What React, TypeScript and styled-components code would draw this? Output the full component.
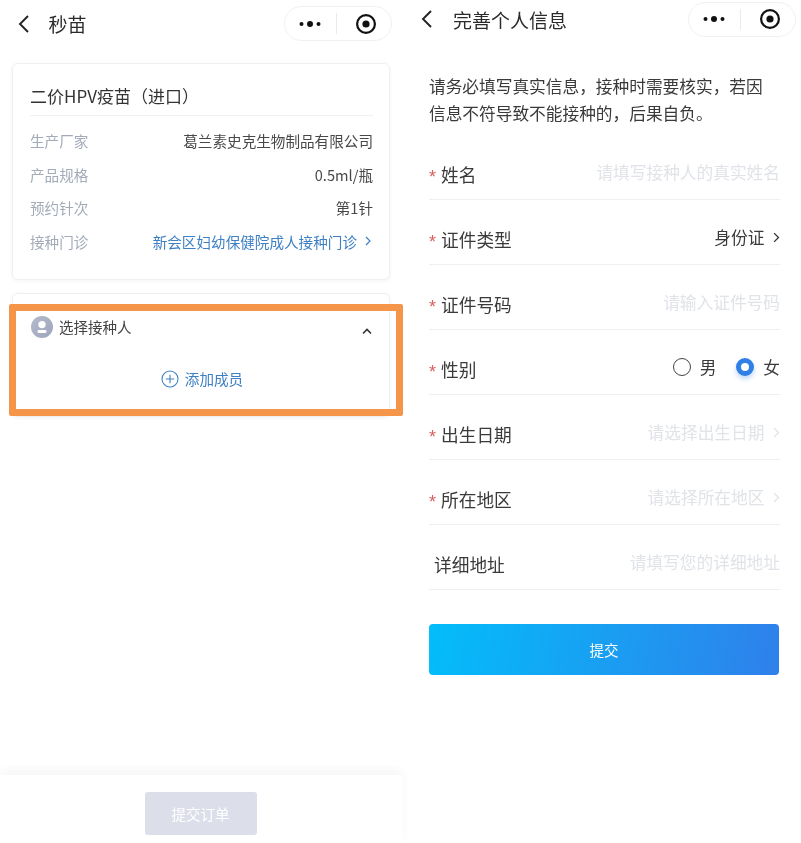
import * as React from 'react';
import styled, { createGlobalStyle } from 'styled-components';

const GlobalStyle = createGlobalStyle`
    html, body {
        margin: 0;
        padding: 0;
        background: #fff;
    }
    body {
        font-family: "Noto Sans CJK SC", "Liberation Sans", sans-serif;
        color: #333;
    }
    * {
        box-sizing: border-box;
    }
`;

const Page = styled.div`
    position: relative;
    display: flex;
    width: 801px;
    height: 843px;
    overflow: hidden;
    filter: blur(0.4px);
`;

const Screen = styled.section<{ $width: number }>`
    display: flex;
    flex-direction: column;
    width: ${(p) => p.$width}px;
    height: 100%;
`;

const NavBar = styled.header<{ $top: number; $right: number; $height: number }>`
    display: flex;
    flex: 0 0 auto;
    align-items: flex-start;
    height: ${(p) => p.$height}px;
    padding: ${(p) => p.$top}px ${(p) => p.$right}px 0 17px;
`;

const BackButton = styled.div<{ $width: number }>`
    display: flex;
    align-items: center;
    width: ${(p) => p.$width}px;
    height: 35px;
    color: #222;
`;

const NavTitle = styled.h1`
    flex: 1;
    margin: 0;
    font-size: 19px;
    font-weight: 400;
    line-height: 35px;
    color: #2b2b2b;
`;

const Capsule = styled.div`
    display: flex;
    align-items: center;
    width: 108px;
    height: 35px;
    border: 1px solid #eff0f1;
    border-radius: 18px;
    background: #fff;
`;

const CapsuleSlot = styled.div<{ $shift?: number }>`
    display: flex;
    flex: 1;
    align-items: center;
    justify-content: center;
    height: 100%;
    padding-left: ${(p) => p.$shift ?? 0}px;
`;

const CapsuleDivider = styled.div`
    width: 1px;
    height: 21px;
    background: #eaeaea;
`;

const Content = styled.main`
    flex: 1;
    padding: 0 13px 0 12px;
`;

const Card = styled.div`
    margin-bottom: 13px;
    padding: 17px 16px 0 17px;
    border: 1px solid #eef0f2;
    border-radius: 6px;
    background: #fff;
    box-shadow: 0 1px 4px rgba(40, 50, 70, 0.06);
`;

const VaccineCard = styled(Card)`
    height: 217px;
`;

const MemberCard = styled(Card)`
    height: 124px;
    padding: 21px 17px 0 18px;
`;

const CardTitle = styled.h2`
    margin: 0;
    padding-bottom: 5px;
    border-bottom: 1px solid #f0f1f3;
    font-size: 17px;
    font-weight: 400;
    line-height: 29px;
    color: #333;
`;

const InfoList = styled.dl`
    margin: 8px 0 0;
`;

const InfoRow = styled.div`
    display: flex;
    align-items: center;
    justify-content: space-between;
    height: 33.5px;
    font-size: 14.6px;
`;

const InfoLabel = styled.dt`
    color: #a3abb9;
`;

const InfoValue = styled.dd<{ $link?: boolean }>`
    display: flex;
    align-items: center;
    gap: 8px;
    margin: 0;
    padding-right: ${(p) => (p.$link ? '2px' : '0')};
    color: ${(p) => (p.$link ? '#3f80c4' : '#484848')};
`;

const MemberHeader = styled.div`
    display: flex;
    align-items: center;
    height: 24px;
    font-size: 14.5px;
    color: #444;
`;

const MemberAvatar = styled.div`
    display: flex;
    flex: 0 0 auto;
    margin-right: 6px;
`;

const MemberName = styled.span`
    flex: 1;
    padding-bottom: 2px;
`;

const CollapseIcon = styled.div`
    display: flex;
    margin: 8px 0 0;
`;

const AddMember = styled.div`
    display: flex;
    align-items: center;
    justify-content: center;
    gap: 6px;
    margin-top: 29px;
    padding-left: 1px;
    font-size: 14.6px;
    color: #3f80c4;
`;

const Footer = styled.footer`
    display: flex;
    flex: 0 0 auto;
    justify-content: center;
    height: 68px;
    padding: 17px 2px 0 0;
    background: #fff;
    box-shadow: 0 -5px 8px rgba(60, 60, 70, 0.045);
`;

const OrderButton = styled.div`
    display: flex;
    align-items: center;
    justify-content: center;
    width: 112px;
    height: 43px;
    border-radius: 3px;
    background: #dcdfea;
    font-size: 14.5px;
    color: #fff;
`;

const Highlight = styled.div`
    position: absolute;
    top: 304px;
    left: 9px;
    width: 394px;
    height: 112px;
    border: 7px solid #f59549;
    border-radius: 2px;
`;

const FormBody = styled.div`
    flex: 1;
    padding: 0 21px 0 26px;
`;

const Notice = styled.p`
    margin: 16px 0 8px;
    font-size: 16.7px;
    line-height: 27px;
    color: #3a3a3a;
`;

const FieldRow = styled.div`
    display: flex;
    align-items: center;
    height: 65px;
    padding-top: 14px;
    border-bottom: 1px solid #eeeff1;
`;

const Star = styled.span`
    flex: 0 0 auto;
    width: 12px;
    padding-top: 6px;
    font-family: "Liberation Sans", sans-serif;
    font-size: 18px;
    line-height: 20px;
    color: #d9605f;
`;

const FieldLabel = styled.label<{ $indent?: boolean }>`
    flex: 1;
    padding-left: ${(p) => (p.$indent ? '5px' : '0')};
    font-size: 17.7px;
    color: #3a3a3a;
`;

const FieldValue = styled.div<{ $placeholder?: boolean }>`
    display: flex;
    align-items: center;
    gap: 9px;
    padding-bottom: 3px;
    font-size: 16.7px;
    color: ${(p) => (p.$placeholder ? '#e0e3e7' : '#3a3a3a')};
`;

const RadioGroup = styled.div`
    display: flex;
    align-items: center;
    padding-bottom: 3px;
    font-size: 16.7px;
    color: #3a3a3a;
`;

const RadioOption = styled.div`
    display: flex;
    align-items: center;
    gap: 9px;
    margin-left: 20px;
`;

const RadioDot = styled.span<{ $checked?: boolean }>`
    display: block;
    width: 18px;
    height: 18px;
    border-radius: 50%;
    border: ${(p) => (p.$checked ? '5.5px solid #2f7fe6' : '1.5px solid #444')};
    background: #fff;
    box-shadow: ${(p) => (p.$checked ? '0 3px 5px rgba(47, 127, 230, 0.3)' : 'none')};
`;

const SubmitButton = styled.div`
    display: flex;
    align-items: center;
    justify-content: center;
    width: 350px;
    height: 51px;
    margin-top: 34px;
    border-radius: 4px;
    background: linear-gradient(100deg, #03bdfa 0%, #2f80ea 100%);
    font-size: 14.5px;
    color: #fff;
`;

function BackIcon() {
    return (
        <svg width="13" height="20" viewBox="0 0 13 20" fill="none">
            <path d="M11 2 3 10l8 8" stroke="currentColor" strokeWidth="1.9" />
        </svg>
    );
}

function MoreIcon() {
    return (
        <svg width="24" height="10" viewBox="0 0 24 10">
            <circle cx="3.5" cy="5" r="2" fill="#111" />
            <circle cx="12" cy="5" r="3" fill="#111" />
            <circle cx="20.5" cy="5" r="2" fill="#111" />
        </svg>
    );
}

function TargetIcon() {
    return (
        <svg width="22" height="22" viewBox="0 0 22 22" fill="none">
            <circle cx="11" cy="11" r="8.9" stroke="#111" strokeWidth="2.2" />
            <circle cx="11" cy="11" r="3.6" fill="#111" />
        </svg>
    );
}

function Chevron({ color, size }: { color: string; size: number }) {
    return (
        <svg width={size * 0.6} height={size} viewBox="0 0 6 10" fill="none">
            <path d="M1 1l4 4-4 4" stroke={color} strokeWidth="1.2" />
        </svg>
    );
}

function PersonAvatar() {
    return (
        <svg width="22" height="22" viewBox="0 0 22 22">
            <defs>
                <linearGradient id="avatarFill" x1="0" y1="0" x2="1" y2="1">
                    <stop offset="0" stopColor="#b5bacb" />
                    <stop offset="1" stopColor="#9ea6bd" />
                </linearGradient>
            </defs>
            <circle cx="11" cy="11" r="11" fill="url(#avatarFill)" />
            <circle cx="11" cy="8.6" r="3.7" fill="#fff" />
            <rect x="6.5" y="14" width="9" height="3" rx="1.2" fill="#fff" />
        </svg>
    );
}

function CollapseChevron() {
    return (
        <svg width="10" height="7" viewBox="0 0 10 7" fill="none">
            <path d="M1 5.5 5 1.5l4 4" stroke="#333" strokeWidth="1.6" />
        </svg>
    );
}

function PlusCircle() {
    return (
        <svg width="18" height="18" viewBox="0 0 18 18" fill="none" stroke="#3f80c4">
            <circle cx="9" cy="9" r="8" strokeWidth="1.1" />
            <path d="M9 4.8v8.4M4.8 9h8.4" strokeWidth="1.1" />
        </svg>
    );
}

type NavProps = { title: string; top: number; right: number; height: number; backWidth: number };

function Nav({ title, top, right, height, backWidth }: NavProps) {
    return (
        <NavBar $top={top} $right={right} $height={height}>
            <BackButton $width={backWidth}>
                <BackIcon />
            </BackButton>
            <NavTitle>{title}</NavTitle>
            <Capsule>
                <CapsuleSlot>
                    <MoreIcon />
                </CapsuleSlot>
                <CapsuleDivider />
                <CapsuleSlot $shift={4}>
                    <TargetIcon />
                </CapsuleSlot>
            </Capsule>
        </NavBar>
    );
}

const fields = [
    { label: '姓名', placeholder: '请填写接种人的真实姓名' },
    { label: '证件类型', value: '身份证', arrow: true },
    { label: '证件号码', placeholder: '请输入证件号码' },
    { label: '性别', radio: true },
    { label: '出生日期', placeholder: '请选择出生日期', arrow: true },
    { label: '所在地区', placeholder: '请选择所在地区', arrow: true },
    { label: '详细地址', placeholder: '请填写您的详细地址', optional: true },
];

export default function App(): React.ReactElement {
    return (
        <Page>
            <GlobalStyle />
            <Screen $width={403}>
                <Nav title="秒苗" top={6} right={11} height={63} backWidth={31.5} />
                <Content>
                    <VaccineCard>
                        <CardTitle>二价HPV疫苗（进口）</CardTitle>
                        <InfoList>
                            <InfoRow>
                                <InfoLabel>生产厂家</InfoLabel>
                                <InfoValue>葛兰素史克生物制品有限公司</InfoValue>
                            </InfoRow>
                            <InfoRow>
                                <InfoLabel>产品规格</InfoLabel>
                                <InfoValue>0.5ml/瓶</InfoValue>
                            </InfoRow>
                            <InfoRow>
                                <InfoLabel>预约针次</InfoLabel>
                                <InfoValue>第1针</InfoValue>
                            </InfoRow>
                            <InfoRow>
                                <InfoLabel>接种门诊</InfoLabel>
                                <InfoValue $link>
                                    新会区妇幼保健院成人接种门诊
                                    <Chevron color="#3f80c4" size={10} />
                                </InfoValue>
                            </InfoRow>
                        </InfoList>
                    </VaccineCard>
                    <MemberCard>
                        <MemberHeader>
                            <MemberAvatar>
                                <PersonAvatar />
                            </MemberAvatar>
                            <MemberName>选择接种人</MemberName>
                            <CollapseIcon>
                                <CollapseChevron />
                            </CollapseIcon>
                        </MemberHeader>
                        <AddMember>
                            <PlusCircle />
                            添加成员
                        </AddMember>
                    </MemberCard>
                </Content>
                <Footer>
                    <OrderButton>提交订单</OrderButton>
                </Footer>
            </Screen>
            <Screen $width={398}>
                <Nav title="完善个人信息" top={1.5} right={5} height={56.5} backWidth={33} />
                <FormBody>
                    <Notice>
                        请务必填写真实信息，接种时需要核实，若因
                        <br />
                        信息不符导致不能接种的，后果自负。
                    </Notice>
                    {fields.map((field) => (
                        <FieldRow key={field.label}>
                            {!field.optional && <Star>*</Star>}
                            <FieldLabel $indent={field.optional}>{field.label}</FieldLabel>
                            {field.radio ? (
                                <RadioGroup>
                                    <RadioOption>
                                        <RadioDot />男
                                    </RadioOption>
                                    <RadioOption>
                                        <RadioDot $checked />女
                                    </RadioOption>
                                </RadioGroup>
                            ) : (
                                <FieldValue $placeholder={!!field.placeholder}>
                                    {field.placeholder ?? field.value}
                                    {field.arrow && (
                                        <Chevron color={field.placeholder ? '#dfe2e6' : '#333'} size={11} />
                                    )}
                                </FieldValue>
                            )}
                        </FieldRow>
                    ))}
                    <SubmitButton>提交</SubmitButton>
                </FormBody>
            </Screen>
            <Highlight />
        </Page>
    );
}
